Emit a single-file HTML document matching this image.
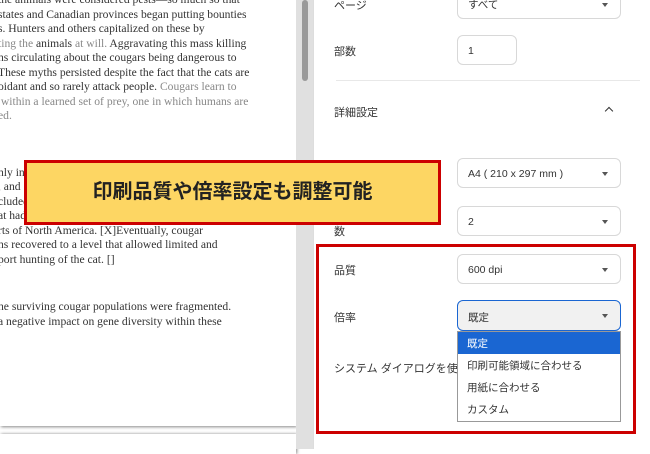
<!DOCTYPE html>
<html><head><meta charset="utf-8"><style>
*{margin:0;padding:0;box-sizing:border-box}
body{width:650px;height:449px;overflow:hidden;background:#fff;position:relative;font-family:"Liberation Sans","Noto Sans CJK JP",sans-serif}
.gut{position:absolute;left:296px;top:0;width:17px;height:449px;background:#e0e0e0}
.thumb{position:absolute;left:302px;top:0;width:6px;height:81px;background:#9a9a9a;border-radius:3px}
.page{position:absolute;left:0;top:0;width:296px;height:426px;background:#fff;box-shadow:1px 1px 3px #888;overflow:hidden}
.page2{position:absolute;left:0;top:434px;width:296px;height:20px;background:#fff;box-shadow:1px 0 3px #888}
.t{position:absolute;left:-2px;white-space:nowrap;font-family:"Liberation Serif",serif;font-size:11.6px;color:#333}
.g{color:#888}
.panel{position:absolute;left:313px;top:0;width:337px;height:449px;background:#fff;border-left:1px solid #ddd}
.lab{position:absolute;left:334px;font-size:11px;color:#333}
.sel{position:absolute;left:457px;width:164px;height:30px;border:1px solid #d8d8d8;border-radius:6px;font-size:10.5px;color:#333;padding:9px 0 0 10px}
.sel:after{content:"";position:absolute;right:12px;top:13px;border-left:3px solid transparent;border-right:3px solid transparent;border-top:4px solid #555}
.nocar:after{display:none}
.red{position:absolute;left:316px;top:244px;width:320px;height:190px;border:3px solid #c00}
.dd{position:absolute;left:457px;top:331px;width:164px;height:91px;border:1px solid #999;background:#fff;font-size:10.5px;color:#333}
.dd div{height:22px;padding:4px 0 0 9px}
.call{position:absolute;left:24px;top:160px;width:417px;height:65px;background:#fdd663;border:3px solid #c00;font-size:20px;font-weight:bold;text-align:center;line-height:59px;color:#222}
</style></head><body>
<div class="page">
<div class="t" style="top:-7px">the animals were considered pests—so much so that</div>
<div class="t" style="top:8px">states and Canadian provinces began putting bounties</div>
<div class="t" style="top:22px">s. Hunters and others capitalized on these by</div>
<div class="t" style="top:37px"><span class="g">ting the</span> animals <span class="g">at will.</span> Aggravating this mass killing</div>
<div class="t" style="top:51px">ns circulating about the cougars being dangerous to</div>
<div class="t" style="top:66px">These myths persisted despite the fact that the cats are</div>
<div class="t" style="top:80px">oidant and so rarely attack people. <span class="g">Cougars learn to</span></div>
<div class="t g" style="top:95px">&nbsp;within a learned set of prey, one in which humans are</div>
<div class="t g" style="top:109px">ed.</div>
<div class="t" style="top:166px">nly in</div>
<div class="t" style="top:180px">, and</div>
<div class="t" style="top:195px">cluded</div>
<div class="t" style="top:209px">at had</div>
<div class="t" style="top:224px">rts of North America. [X]Eventually, cougar</div>
<div class="t" style="top:238px">ns recovered to a level that allowed limited and</div>
<div class="t" style="top:253px">port hunting of the cat. []</div>
<div class="t" style="top:300px">he surviving cougar populations were fragmented.</div>
<div class="t" style="top:315px">a negative impact on gene diversity within these</div>
</div>
<div class="page2"></div>
<div class="gut"></div><div class="thumb"></div>
<div class="panel"></div>
<div style="position:absolute;left:336px;top:80px;width:304px;height:1px;background:#e8e8e8"></div>
<div class="lab" style="top:-3px">ページ</div>
<div class="sel" style="top:-11px;padding-top:7px">すべて</div>
<div class="lab" style="top:43px">部数</div>
<div class="sel nocar" style="top:35px;width:60px">1</div>
<div class="lab" style="top:104px">詳細設定</div>
<div style="position:absolute;left:606px;top:108px;width:6px;height:6px;border-left:1.5px solid #333;border-top:1.5px solid #333;transform:rotate(45deg)"></div>
<div class="sel" style="top:158px">A4 ( 210 x 297 mm )</div>
<div class="lab" style="top:223px">数</div>
<div class="sel" style="top:206px">2</div>
<div class="red"></div>
<div class="lab" style="top:262px">品質</div>
<div class="sel" style="top:254px">600 dpi</div>
<div class="lab" style="top:309px">倍率</div>
<div class="sel" style="top:300px;border:1.5px solid #1a66d2;background:#f1f1f1;height:31px">既定</div>
<div class="lab" style="top:360px">システム ダイアログを使</div>
<div class="dd"><div style="background:#1a66d2;color:#fff">既定</div><div>印刷可能領域に合わせる</div><div>用紙に合わせる</div><div>カスタム</div></div>
<div class="call">印刷品質や倍率設定も調整可能</div>
</body></html>
